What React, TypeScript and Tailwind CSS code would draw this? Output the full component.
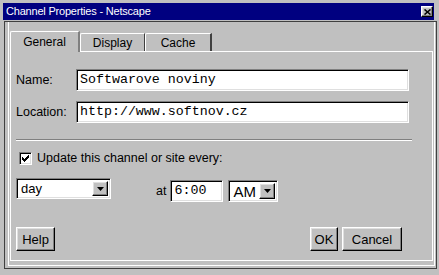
import React from 'react';

// Win95-style bevels
const sunken =
  'border border-t-[#808080] border-l-[#808080] border-b-white border-r-white shadow-[inset_1px_1px_0_#000,inset_-1px_-1px_0_#dfdfdf]';
const raised =
  'border border-t-white border-l-white border-b-black border-r-black shadow-[inset_-1px_-1px_0_#808080,inset_1px_1px_0_#dfdfdf]';

function ArrowButton() {
  return (
    <div className={`${raised} bg-[#c0c0c0] w-[16px] h-full flex items-center justify-center`}>
      <svg width="7" height="4" viewBox="0 0 7 4">
        <path d="M0 0h7L3.5 4z" fill="#000" />
      </svg>
    </div>
  );
}

function Select({ value, width, textClass }: { value: string; width: string; textClass: string }) {
  return (
    <div className={`${sunken} ${width} bg-white flex items-stretch p-[2px]`}>
      <div className={`flex-1 flex items-center pl-[2px] leading-none ${textClass}`}>{value}</div>
      <ArrowButton />
    </div>
  );
}

function TextField({ value, width }: { value: string; width: string }) {
  return (
    <div
      className={`${sunken} ${width} h-[22px] bg-white flex items-center pl-[3px] font-['Liberation_Mono','Courier_New',monospace] text-[13.3px] leading-none`}
    >
      {value}
    </div>
  );
}

function Button({ label, width }: { label: string; width: string }) {
  return (
    <div className={`${raised} ${width} h-[24px] bg-[#c0c0c0] flex items-center justify-center text-[13px] leading-none`}>
      {label}
    </div>
  );
}

export default function App() {
  return (
    <div className="w-[439px] h-[275px] bg-[#c0c0c0] overflow-hidden font-['Liberation_Sans',Arial,sans-serif] text-black pt-[3px]">
      {/* title bar */}
      <div className="ml-[3px] w-[431px] h-[17px] bg-[#000080] flex items-center justify-between pl-[3px] pr-[1px]">
        <span className="text-white text-[11px] leading-none tracking-[-0.2px]">Channel Properties - Netscape</span>
        <div className={`${raised} w-[12px] h-[11px] bg-[#c0c0c0] flex items-center justify-center`}>
          <svg width="7" height="6" viewBox="0 0 7 6">
            <path d="M0.5 0.5 L6.5 5.5 M6.5 0.5 L0.5 5.5" stroke="#000" strokeWidth="1.6" />
          </svg>
        </div>
      </div>

      {/* window body */}
      <div className="ml-[4px] mt-[1px] w-[433px] h-[248px] border border-[#404040] pl-[3px] pr-[1px] pb-[2px] flex flex-col">
        <div className="flex-1 border-l border-r border-b border-white pl-[1px] pr-[1px] pb-[4px] pt-[8px] flex flex-col">
          {/* tabs */}
          <div className="flex items-end h-[21px] relative z-10">
            <div className="w-[70px] h-[21px] bg-[#c0c0c0] border-l border-t border-white border-r-2 border-r-[#808080] rounded-tl-[2px] flex items-center justify-center text-[12px] -mb-[1px] pb-[1px]">
              General
            </div>
            <div className="w-[65px] h-[18px] border-l border-t border-white border-r border-r-[#404040] rounded-tl-[2px] flex items-center justify-center text-[12px]">
              Display
            </div>
            <div className="w-[67px] h-[18px] border-l border-t border-white border-r-2 border-r-[#404040] rounded-tl-[2px] flex items-center justify-center text-[12px]">
              Cache
            </div>
          </div>

          {/* panel */}
          <div className="flex-1 border border-white pl-[5px] pt-[17px] flex flex-col">
            <div className="flex items-center">
              <span className="w-[60px] text-[12.5px]">Name:</span>
              <TextField value="Softwarove noviny" width="w-[333px]" />
            </div>
            <div className="flex items-center mt-[10px]">
              <span className="w-[60px] text-[12.5px]">Location:</span>
              <TextField value="http://www.softnov.cz" width="w-[333px]" />
            </div>

            <div className="mt-[16px] w-[396px] border-t border-t-[#808080] border-b border-b-white" />

            <div className="flex items-center h-[13px] mt-[11px] ml-[3px]">
              <div className={`${sunken} w-[13px] h-[13px] bg-white flex items-center justify-center`}>
                <svg width="7" height="7" viewBox="0 0 7 7">
                  <path d="M0 2h1v1h1v1h1v-1h1v-1h1v-1h1v-1h1v3h-1v1h-1v1h-1v1h-1v1h-1v-1h-1v-1h-1z" fill="#000" />
                </svg>
              </div>
              <span className="ml-[5px] text-[12.5px] leading-none">Update this channel or site every:</span>
            </div>

            <div className="flex items-start mt-[13px] h-[24px]">
              <Select value="day" width="w-[95px] h-[21px]" textClass="text-[13px]" />
              <span className="ml-[45px] mt-[7px] text-[12.5px] leading-none">at</span>
              <div className="ml-[4px] mt-[2px]">
                <TextField value="6:00" width="w-[53px]" />
              </div>
              <div className="ml-[5px] mt-[2px]">
                <Select value="AM" width="w-[50px] h-[22px]" textClass="text-[15px]" />
              </div>
            </div>

            <div className="flex justify-between w-[386px] mt-[25px]">
              <Button label="Help" width="w-[39px]" />
              <div className="flex gap-[4px]">
                <Button label="OK" width="w-[28px]" />
                <Button label="Cancel" width="w-[60px]" />
              </div>
            </div>
          </div>
        </div>
      </div>
    </div>
  );
}
